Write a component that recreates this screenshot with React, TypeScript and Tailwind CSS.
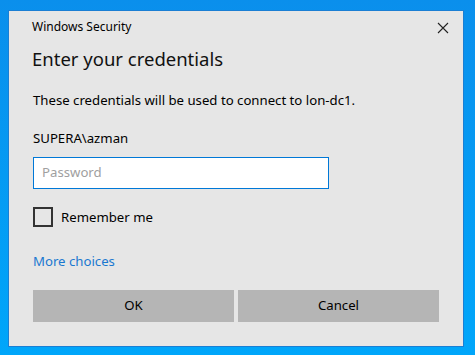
import React from "react";

const App: React.FC = () => {
  return (
    <div
      className="h-[355px] w-[475px] overflow-hidden bg-gradient-to-b from-[#0a8fec] to-[#00a6fa] pl-[8px] pt-[10px]"
      style={{ fontFamily: '"Noto Sans", "Open Sans", sans-serif' }}
    >
      <div className="flex h-[337px] w-[456px] flex-col border border-[#1a7fd4] bg-[#e6e6e6] text-[#000]">
        <div className="flex items-center justify-between pl-[23px] pr-[14px] pt-[6px]">
          <span className="text-[12px] leading-[20px]">Windows Security</span>
          <svg width="12" height="12" viewBox="0 0 12 12" className="mt-[2px]">
            <path d="M1 1 L11 11 M11 1 L1 11" stroke="#222" strokeWidth="1.1" />
          </svg>
        </div>
        <h1 className="mt-[8px] pl-[23px] text-[18.5px] font-normal leading-[28px] text-[#111]">
          Enter your credentials
        </h1>
        <p className="mt-[17px] pl-[24px] text-[13.2px] leading-[20px]">
          These credentials will be used to connect to lon-dc1.
        </p>
        <p className="mt-[18px] pl-[24px] text-[13.2px] leading-[20px]">SUPERA\azman</p>
        <div className="mt-[9px] pl-[24px]">
          <div className="flex h-[32px] w-[296px] items-center border-[1.5px] border-[#0078d7] bg-white pl-[8px]">
            <span className="text-[13.2px] text-[#a0a0a0]">Password</span>
          </div>
        </div>
        <div className="mt-[18px] flex items-center gap-[8px] pl-[24px]">
          <div className="h-[20px] w-[20px] border-2 border-[#333]" />
          <span className="text-[13.2px] leading-[20px]">Remember me</span>
        </div>
        <div className="mt-[21px] pl-[24px]">
          <span className="text-[13.2px] leading-[20px] text-[#1a78d0]">More choices</span>
        </div>
        <div className="mt-[18px] flex gap-[4px] pl-[24px]">
          <button className="h-[32px] w-[201px] bg-[#b5b5b5] text-[13.2px]">OK</button>
          <button className="h-[32px] w-[201px] bg-[#b5b5b5] text-[13.2px]">Cancel</button>
        </div>
      </div>
    </div>
  );
};

export default App;
